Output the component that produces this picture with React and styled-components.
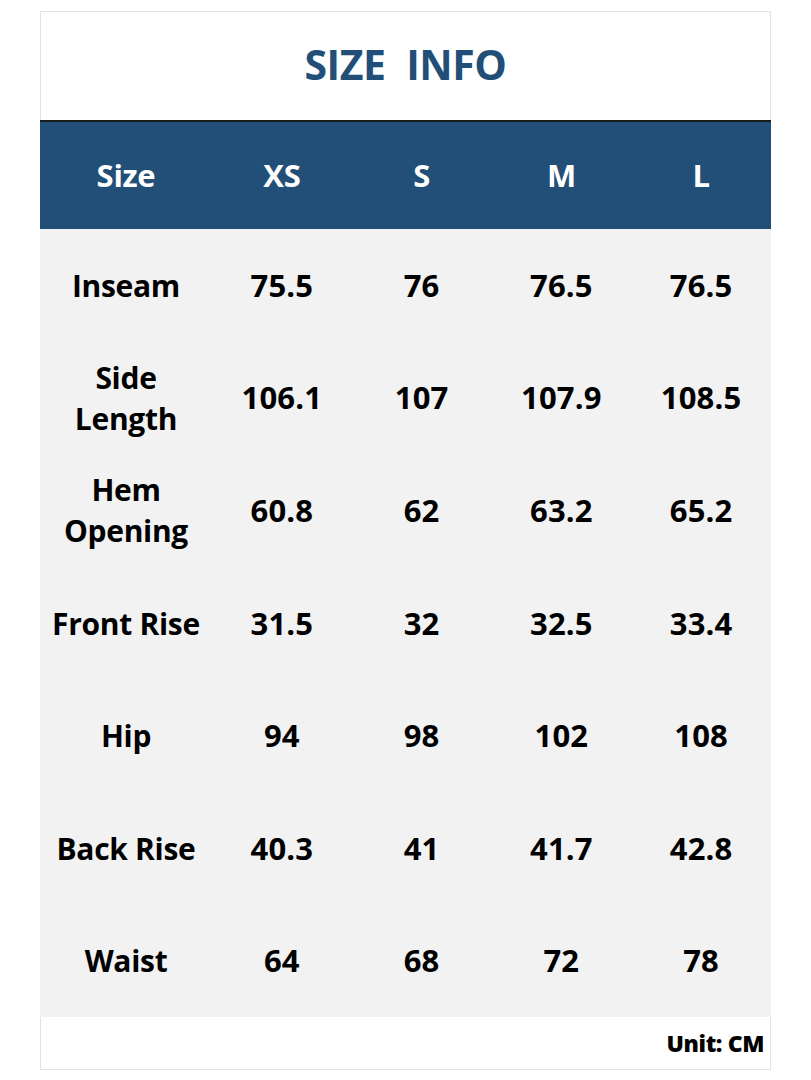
import React from 'react';
import styled, { createGlobalStyle } from 'styled-components';

const theme = {
  blue: '#214f78',
  grey: '#f2f2f2',
  line: '#e3e3e3',
  ink: '#000',
};

const GlobalStyle = createGlobalStyle`
  html, body {
    margin: 0;
    padding: 0;
    background: #fff;
  }
  body {
    font-family: "Open Sans", "Noto Sans", sans-serif;
  }
`;

const Page = styled.div`
  width: 811px;
  height: 1080px;
  padding: 11px 40px 0 40px;
  box-sizing: border-box;
`;

const Sheet = styled.div`
  width: 731px;
  display: flex;
  flex-direction: column;
`;

const TitleBox = styled.div`
  height: 108px;
  border: 1px solid ${theme.line};
  border-bottom: none;
  display: flex;
  align-items: center;
  justify-content: center;
`;

const Title = styled.h1`
  margin: 0 0 4px 0;
  color: ${theme.blue};
  font-size: 41px;
  font-weight: 700;
  letter-spacing: -0.4px;
  white-space: pre;
`;

const Table = styled.div`
  display: grid;
  grid-template-columns: 172px repeat(4, 1fr);
  border-top: 2px solid #1a1a1a;
`;

const HeadCell = styled.div`
  height: 107px;
  background: ${theme.blue};
  color: #fff;
  font-size: 31px;
  font-weight: 700;
  letter-spacing: -0.3px;
  display: flex;
  align-items: center;
  justify-content: center;
  padding-bottom: 2px;
  box-sizing: border-box;
`;

const Cell = styled.div`
  height: 112.6px;
  background: ${theme.grey};
  color: ${theme.ink};
  font-size: ${p => (p.$label ? '30px' : '31px')};
  font-weight: 700;
  letter-spacing: ${p => (p.$label ? '-0.3px' : '0.2px')};
  line-height: 41px;
  text-align: center;
  display: flex;
  align-items: center;
  justify-content: center;
`;

const Footer = styled.div`
  height: 52px;
  border: 1px solid ${theme.line};
  border-top: none;
  display: flex;
  align-items: center;
  justify-content: flex-end;
  padding-right: 6px;
`;

const Unit = styled.span`
  font-size: 23px;
  font-weight: 800;
  letter-spacing: -0.4px;
  color: ${theme.ink};
`;

const sizes = ['XS', 'S', 'M', 'L'];

const rows = [
  { label: ['Inseam'], values: ['75.5', '76', '76.5', '76.5'] },
  { label: ['Side', 'Length'], values: ['106.1', '107', '107.9', '108.5'] },
  { label: ['Hem', 'Opening'], values: ['60.8', '62', '63.2', '65.2'] },
  { label: ['Front Rise'], values: ['31.5', '32', '32.5', '33.4'] },
  { label: ['Hip'], values: ['94', '98', '102', '108'] },
  { label: ['Back Rise'], values: ['40.3', '41', '41.7', '42.8'] },
  { label: ['Waist'], values: ['64', '68', '72', '78'] },
];

const App = () => (
  <Page>
    <GlobalStyle />
    <Sheet>
      <TitleBox>
        <Title>{'SIZE  INFO'}</Title>
      </TitleBox>
      <Table>
        <HeadCell>Size</HeadCell>
        {sizes.map(s => (
          <HeadCell key={s}>{s}</HeadCell>
        ))}
        {rows.map(row => (
          <React.Fragment key={row.label.join(' ')}>
            <Cell $label>
              <span>
                {row.label.map((l, i) => (
                  <React.Fragment key={l}>
                    {i > 0 && <br />}
                    {l}
                  </React.Fragment>
                ))}
              </span>
            </Cell>
            {row.values.map((v, i) => (
              <Cell key={i}>{v}</Cell>
            ))}
          </React.Fragment>
        ))}
      </Table>
      <Footer>
        <Unit>Unit: CM</Unit>
      </Footer>
    </Sheet>
  </Page>
);

export default App;
